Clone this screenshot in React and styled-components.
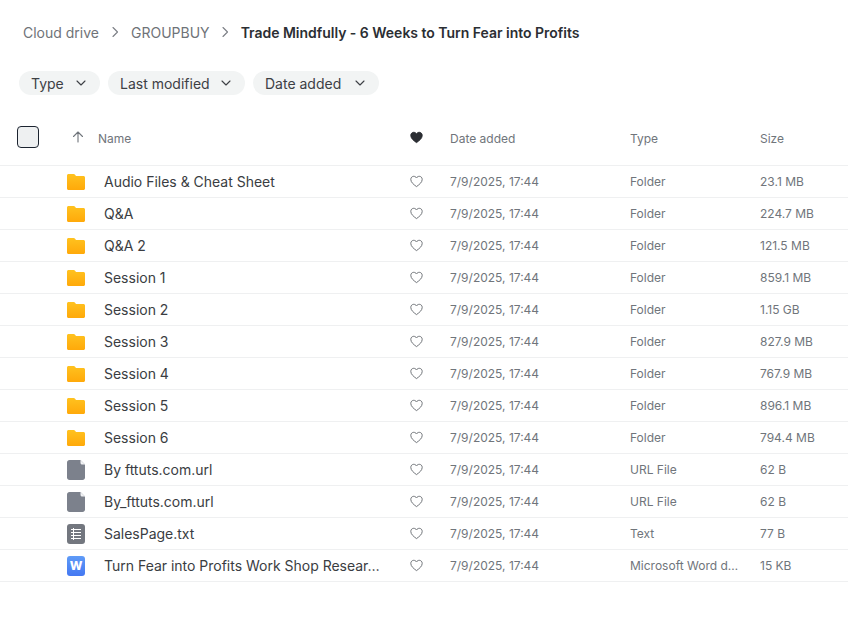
import React from "react";
import styled, { createGlobalStyle } from "styled-components";

const GlobalStyle = createGlobalStyle`
    html, body {
        margin: 0;
        padding: 0;
        background: #ffffff;
        font-family: Inter, "Liberation Sans", sans-serif;
    }
`;

const Page = styled.div`
    width: 848px;
    height: 631px;
    overflow: hidden;
    display: flex;
    flex-direction: column;
`;

const Breadcrumbs = styled.nav`
    display: flex;
    align-items: center;
    height: 20px;
    margin-top: 22px;
    padding-left: 23px;
    font-size: 14px;
    color: #6f7378;
`;

const Crumb = styled.span`
    color: ${({ $current }) => ($current ? "#2b2e33" : "#6f7378")};
    font-weight: ${({ $current }) => ($current ? 600 : 400)};
    letter-spacing: ${({ $current }) => ($current ? "-0.02px" : "0")};
`;

const CrumbSep = styled.span`
    display: flex;
    width: ${({ $w }) => $w}px;
    justify-content: center;
    color: #7b7f85;
`;

const Filters = styled.div`
    display: flex;
    gap: 8px;
    margin-top: 29px;
    padding-left: 19px;
`;

const Chip = styled.div`
    display: flex;
    align-items: center;
    justify-content: space-between;
    box-sizing: border-box;
    width: ${({ $w }) => $w}px;
    height: 24px;
    padding: 0 13px 0 12px;
    border-radius: 12px;
    background: #f2f4f4;
    font-size: 14px;
    color: #3d4045;
`;

const HeadRow = styled.div`
    display: grid;
    grid-template-columns: 78px 20px 312px 40px 180px 130px 1fr;
    align-items: center;
    box-sizing: border-box;
    height: 71px;
    padding-top: 14px;
    border-bottom: 1px solid #eff0f1;
    font-size: 12px;
    color: #70757b;
`;

const HeadLabel = styled.div`
    padding-top: 2px;
`;

const CheckCell = styled.div`
    padding-left: 17px;
`;

const Check = styled.div`
    box-sizing: border-box;
    width: 22px;
    height: 22px;
    border: 1px solid #1c2430;
    border-radius: 4px;
    background: #eef0f1;
`;

const ArrowCell = styled.div`
    display: flex;
    margin-left: -7px;
    color: #70757b;
`;

const Row = styled.div`
    display: grid;
    grid-template-columns: 67px 37px 306px 40px 180px 130px 1fr;
    align-items: center;
    height: 31px;
    border-bottom: 1px solid #eff0f1;
    font-size: 12px;
    color: #70757b;
`;

const IconCell = styled.div`
    grid-column: 2;
    display: flex;
`;

const Name = styled.div`
    font-size: 14px;
    color: #3a3d42;
    white-space: nowrap;
    letter-spacing: -0.01px;
`;

const HeartCell = styled.div`
    display: flex;
`;

const Chevron = () => (
    <svg width="12" height="12" viewBox="0 0 12 12" fill="none" stroke="currentColor" strokeWidth="1.1" strokeLinecap="round" strokeLinejoin="round">
        <path d="M2 4l4 4 4-4" />
    </svg>
);

const CrumbArrow = () => (
    <svg width="12" height="12" viewBox="0 0 12 12" fill="none" stroke="currentColor" strokeWidth="1.1" strokeLinecap="round" strokeLinejoin="round">
        <path d="M4 1.5L8.5 6 4 10.5" />
    </svg>
);

const HEART = "M6.5 11.6C3.6 9.500 0.800 7.300 0.800 4.400 0.800 2.600 2.100 1.300 3.700 1.300c1.200 0 2.200 0.600 2.800 1.700 0.600-1.100 1.600-1.700 2.800-1.700 1.600 0 2.900 1.300 2.900 3.100 0 2.900-2.800 5.100-5.700 7.200z";

const Heart = ({ filled }) => (
    <svg width="13" height="13" viewBox="0 0 13 13" fill={filled ? "#2b2e33" : "none"} stroke={filled ? "#2b2e33" : "#6f7378"} strokeWidth="1" strokeLinejoin="round">
        <path d={HEART} />
    </svg>
);

const FolderIcon = () => (
    <svg width="18" height="16" viewBox="0 0 18 16">
        <defs>
            <linearGradient id="folderFill" x1="0" y1="0" x2="0" y2="1">
                <stop offset="0" stopColor="#ffc21f" />
                <stop offset="1" stopColor="#ffa90a" />
            </linearGradient>
        </defs>
        <path d="M1.500 0h5.200c.5 0 .9.2 1.200.6L9 2h7.500c.8 0 1.500.7 1.500 1.500v11c0 .8-.7 1.500-1.500 1.500h-15C.7 16 0 15.300 0 14.500v-13C0 .7.700 0 1.500 0z" fill="url(#folderFill)" />
    </svg>
);

const FileIcon = () => (
    <svg width="18" height="20" viewBox="0 0 18 20">
        <path d="M2.500 0H13.500L18 4.500v13c0 1.400-1.100 2.500-2.500 2.500h-13C1.100 20 0 18.900 0 17.500v-15C0 1.100 1.100 0 2.500 0z" fill="#7c818c" />
        <path d="M13.500 0L18 4.500h-3c-.8 0-1.500-.7-1.500-1.500z" fill="#f1f2f4" />
    </svg>
);

const TextIcon = () => (
    <svg width="18" height="20" viewBox="0 0 18 20">
        <rect width="18" height="20" rx="3" fill="#73777f" />
        <path d="M4 5.500h10M4 8.500h10M4 11.500h10M4 14.500h10M6.500 4v12" stroke="#ffffff" strokeWidth="1" fill="none" />
    </svg>
);

const WordBadge = styled.div`
    display: flex;
    align-items: center;
    justify-content: center;
    width: 18px;
    height: 20px;
    border-radius: 3px;
    background: linear-gradient(180deg, #5f9bf7 0%, #4478f2 100%);
    color: #ffffff;
    font-size: 12px;
    font-weight: 800;
`;

const ICONS = {
    folder: <FolderIcon />,
    file: <FileIcon />,
    text: <TextIcon />,
    word: <WordBadge>W</WordBadge>,
};

const FILES = [
    { icon: "folder", name: "Audio Files & Cheat Sheet", type: "Folder", size: "23.1 MB" },
    { icon: "folder", name: "Q&A", type: "Folder", size: "224.7 MB" },
    { icon: "folder", name: "Q&A 2", type: "Folder", size: "121.5 MB" },
    { icon: "folder", name: "Session 1", type: "Folder", size: "859.1 MB" },
    { icon: "folder", name: "Session 2", type: "Folder", size: "1.15 GB" },
    { icon: "folder", name: "Session 3", type: "Folder", size: "827.9 MB" },
    { icon: "folder", name: "Session 4", type: "Folder", size: "767.9 MB" },
    { icon: "folder", name: "Session 5", type: "Folder", size: "896.1 MB" },
    { icon: "folder", name: "Session 6", type: "Folder", size: "794.4 MB" },
    { icon: "file", name: "By fttuts.com.url", type: "URL File", size: "62 B" },
    { icon: "file", name: "By_fttuts.com.url", type: "URL File", size: "62 B" },
    { icon: "text", name: "SalesPage.txt", type: "Text", size: "77 B" },
    { icon: "word", name: "Turn Fear into Profits Work Shop Resear…", type: "Microsoft Word d…", size: "15 KB" },
];

const App = () => {
    return (
        <Page>
            <GlobalStyle />
            <Breadcrumbs>
                <Crumb>Cloud drive</Crumb>
                <CrumbSep $w={32}><CrumbArrow /></CrumbSep>
                <Crumb>GROUPBUY</Crumb>
                <CrumbSep $w={31}><CrumbArrow /></CrumbSep>
                <Crumb $current>Trade Mindfully - 6 Weeks to Turn Fear into Profits</Crumb>
            </Breadcrumbs>
            <Filters>
                <Chip $w={81}>Type <Chevron /></Chip>
                <Chip $w={137}>Last modified <Chevron /></Chip>
                <Chip $w={126}>Date added <Chevron /></Chip>
            </Filters>
            <HeadRow>
                <CheckCell><Check /></CheckCell>
                <ArrowCell>
                    <svg width="14" height="14" viewBox="0 0 14 14" fill="none" stroke="currentColor" strokeWidth="1.1" strokeLinecap="round" strokeLinejoin="round">
                        <path d="M7 12V2M2.500 6.500L7 2l4.500 4.500" />
                    </svg>
                </ArrowCell>
                <HeadLabel>Name</HeadLabel>
                <HeartCell><Heart filled /></HeartCell>
                <HeadLabel>Date added</HeadLabel>
                <HeadLabel>Type</HeadLabel>
                <HeadLabel>Size</HeadLabel>
            </HeadRow>
            {FILES.map((file) => (
                <Row key={file.name}>
                    <IconCell>{ICONS[file.icon]}</IconCell>
                    <Name>{file.name}</Name>
                    <HeartCell><Heart /></HeartCell>
                    <div>7/9/2025, 17:44</div>
                    <div>{file.type}</div>
                    <div>{file.size}</div>
                </Row>
            ))}
        </Page>
    );
};

export default App;
